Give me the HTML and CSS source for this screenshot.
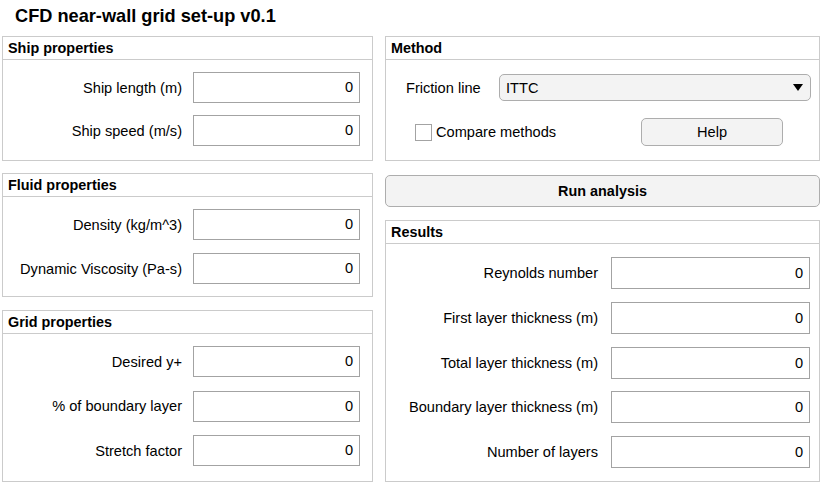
FILE: index.html
```html
<!DOCTYPE html>
<html lang="en">
<head>
<meta charset="utf-8">
<title>CFD near-wall grid set-up v0.1</title>
<link rel="stylesheet" href="styles.css">
</head>
<body>
<div class="app">
  <h1 class="title">CFD near-wall grid set-up v0.1</h1>
  <div class="columns">
    <div class="col">
      <section class="panel panel-ship">
        <div class="panel-head">Ship properties</div>
        <div class="panel-body body-ship">
          <div class="row"><label class="lbl">Ship length (m)</label><div class="field">0</div></div>
          <div class="row"><label class="lbl">Ship speed (m/s)</label><div class="field">0</div></div>
        </div>
      </section>
      <section class="panel panel-fluid">
        <div class="panel-head">Fluid properties</div>
        <div class="panel-body body-fluid">
          <div class="row"><label class="lbl">Density (kg/m^3)</label><div class="field">0</div></div>
          <div class="row"><label class="lbl">Dynamic Viscosity (Pa-s)</label><div class="field">0</div></div>
        </div>
      </section>
      <section class="panel panel-grid">
        <div class="panel-head">Grid properties</div>
        <div class="panel-body body-grid">
          <div class="row"><label class="lbl">Desired y+</label><div class="field">0</div></div>
          <div class="row"><label class="lbl">% of boundary layer</label><div class="field">0</div></div>
          <div class="row"><label class="lbl">Stretch factor</label><div class="field">0</div></div>
        </div>
      </section>
    </div>
    <div class="col">
      <section class="panel panel-method">
        <div class="panel-head">Method</div>
        <div class="panel-body body-method">
          <div class="mrow">
            <span class="mlabel">Friction line</span>
            <div class="dropdown"><span>ITTC</span><svg class="arrow" width="10" height="7" viewBox="0 0 10 7"><polygon points="0,0 10,0 5,7" fill="#000"/></svg></div>
          </div>
          <div class="mrow2">
            <label class="check"><span class="box"></span><span>Compare methods</span></label>
            <button class="btn help">Help</button>
          </div>
        </div>
      </section>
      <button class="btn run">Run analysis</button>
      <section class="panel panel-results">
        <div class="panel-head">Results</div>
        <div class="panel-body body-results">
          <div class="row rrow"><label class="lbl">Reynolds number</label><div class="field rfield">0</div></div>
          <div class="row rrow"><label class="lbl">First layer thickness (m)</label><div class="field rfield">0</div></div>
          <div class="row rrow"><label class="lbl">Total layer thickness (m)</label><div class="field rfield">0</div></div>
          <div class="row rrow"><label class="lbl">Boundary layer thickness (m)</label><div class="field rfield">0</div></div>
          <div class="row rrow"><label class="lbl">Number of layers</label><div class="field rfield">0</div></div>
        </div>
      </section>
    </div>
  </div>
</div>
</body>
</html>
```
FILE: styles.css
```css
* { box-sizing: border-box; }
html, body { margin: 0; padding: 0; background: #fff; }
body {
  font-family: "Liberation Sans", Arial, sans-serif;
  color: #000;
  font-size: 14.6px;
}
.app { width: 823px; height: 483px; overflow: hidden; }
.title {
  margin: 0;
  height: 36px;
  padding: 6px 0 0 15px;
  font-size: 18.2px;
  line-height: 20px;
  font-weight: bold;
}
.columns {
  display: grid;
  grid-template-columns: 371px 435px;
  column-gap: 12px;
  padding-left: 2px;
}
.col { display: flex; flex-direction: column; }
.panel {
  border: 1px solid #cbcbcb;
  background: #fff;
}
.panel-ship { height: 125px; }
.panel-fluid { height: 124px; margin-top: 12px; }
.panel-grid { height: 172px; margin-top: 13px; }
.panel-method { height: 125px; }
.panel-results { height: 262px; margin-top: 13px; }
.panel-head {
  height: 23px;
  border-bottom: 1px solid #cbcbcb;
  padding-left: 5px;
  font-weight: bold;
  font-size: 14.4px;
  line-height: 22px;
}
.panel-body { display: flex; flex-direction: column; }
.body-ship { padding-top: 12px; gap: 12px; }
.body-fluid { padding-top: 12px; gap: 13px; }
.body-grid { padding-top: 12px; gap: 13.5px; }
.body-results { padding-top: 13px; gap: 12.75px; }
.row {
  display: flex;
  align-items: center;
  justify-content: flex-end;
  padding-right: 12px;
}
.lbl { margin-right: 11px; white-space: nowrap; }
.field {
  width: 167px;
  height: 31px;
  border: 1px solid #a3a3a3;
  background: #fff;
  text-align: right;
  padding-right: 6px;
  line-height: 29px;
}
.rrow { padding-right: 9px; }
.rrow .lbl { margin-right: 13px; }
.rfield { width: 199px; height: 32px; line-height: 30px; }

.body-method { padding: 14px 8px 0 20px; }
.mrow { display: flex; align-items: center; height: 27px; }
.mlabel { width: 93px; white-space: nowrap; }
.dropdown {
  flex: 1;
  height: 27px;
  border: 1px solid #adadad;
  border-radius: 5px;
  background: #f3f3f3;
  display: flex;
  align-items: center;
  justify-content: space-between;
  padding: 0 7px 0 6px;
}
.arrow { display: block; }
.mrow2 {
  display: flex;
  align-items: center;
  height: 28px;
  margin-top: 17px;
  padding-left: 9px;
}
.check { display: flex; align-items: center; width: 226px; flex: none; }
.box {
  width: 17px;
  height: 17px;
  border: 1px solid #a3a3a3;
  background: #fff;
  margin-right: 4px;
}
.btn {
  font-family: inherit;
  color: #000;
  border: 1px solid #adadad;
  border-radius: 5px;
  background: #f3f3f3;
  padding: 0;
  margin: 0;
}
.help { width: 142px; height: 28px; font-size: 14.6px; }
.run {
  margin-top: 14px;
  height: 32px;
  width: 100%;
  font-weight: bold;
  font-size: 14.4px;
}
```
